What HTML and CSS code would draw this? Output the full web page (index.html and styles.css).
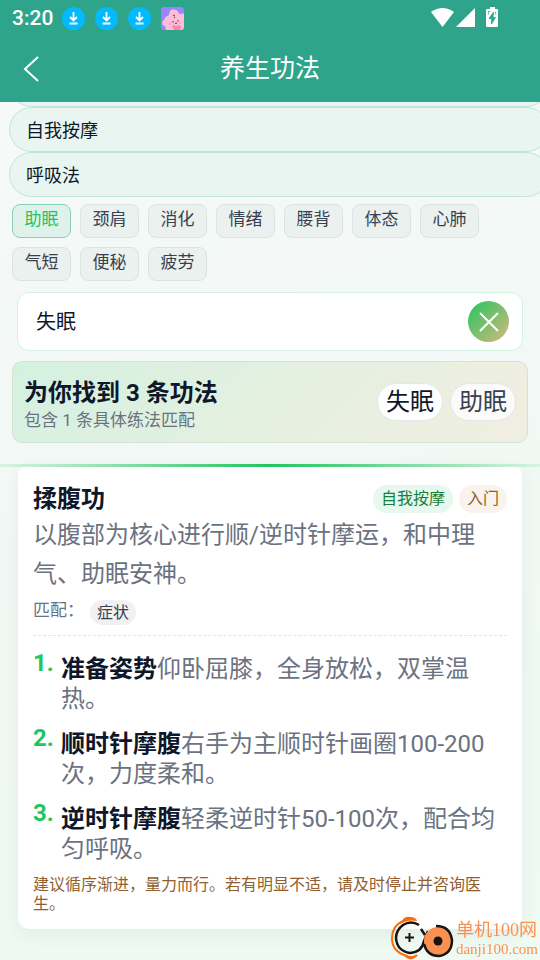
FILE: index.html
```html
<!DOCTYPE html>
<html lang="zh-CN">
<head>
<meta charset="utf-8">
<meta name="viewport" content="width=device-width, initial-scale=1">
<title>养生功法</title>
<link rel="stylesheet" href="styles.css">
</head>
<body>
<header class="top">
  <div class="status">
    <span class="time">3:20</span>
    <svg class="app" viewBox="0 0 23 23"><use href="#download"/></svg>
    <svg class="app" viewBox="0 0 23 23"><use href="#download"/></svg>
    <svg class="app" viewBox="0 0 23 23"><use href="#download"/></svg>
    <svg class="app" viewBox="0 0 23 23">
      <rect width="23" height="23" rx="3" fill="#9985fb"/>
      <path d="M8 8C8 3 12 1 14 3c2 0 4 2 4 4 2 0 4-1 5 0v13q0 3-3 3H5c-1-2 0-3-1-4-3 0-4-4-1-6 1-3 3-4 5-5z" fill="#fdbdd6"/>
      <path d="M11 19l2-1 2 1 3-1 2 2-1 3h-6z" fill="#fb86ad"/>
      <path d="M12 8l2 1M13 11l1-1M12 14v1.500M17 13v1.500M14 16q1 1 2 0" stroke="#55304d" stroke-width="1" fill="none"/>
      <path d="M8 17h2M18 16h2" stroke="#fb86ad" stroke-width="1"/>
    </svg>
    <svg class="signals" viewBox="0 0 70 22">
      <path d="M0 5Q11.500-3 23 5L11.500 20z" fill="#fff"/>
      <path d="M44 1v19H25z" fill="#fff"/>
      <path d="M59 0h5v2h2q1 0 1 1v16q0 1-1 1H56q-1 0-1-1V3q0-1 1-1h3z" fill="#fff"/>
      <path d="M62.500 5L58 11.500h2.500V17l4-6.500H62zM57 4.500h2.500M57.300 4.500v3M64.700 4.500v3" fill="#2ea58b" stroke="#2ea58b" stroke-width=".8"/>
    </svg>
  </div>
  <div class="nav">
    <button class="back" type="button" aria-label="返回"><svg viewBox="0 0 16 26"><path d="M15 1L2 13l13 12" fill="none" stroke="#fff" stroke-width="2"/></svg></button>
    <h1>养生功法</h1>
  </div>
</header>
<main>
  <div class="categories">
    <div class="category"></div>
    <button class="category" type="button">自我按摩</button>
    <button class="category" type="button">呼吸法</button>
  </div>
  <div class="chips">
    <button class="chip active" type="button">助眠</button>
    <button class="chip" type="button">颈肩</button>
    <button class="chip" type="button">消化</button>
    <button class="chip" type="button">情绪</button>
    <button class="chip" type="button">腰背</button>
    <button class="chip" type="button">体态</button>
    <button class="chip" type="button">心肺</button>
    <button class="chip" type="button">气短</button>
    <button class="chip" type="button">便秘</button>
    <button class="chip" type="button">疲劳</button>
  </div>
  <form class="search">
    <input type="text" value="失眠" aria-label="搜索">
    <button class="clear" type="button" aria-label="清除"><svg viewBox="0 0 20 20"><path d="M1 1l18 18M19 1L1 19" stroke="#fff" stroke-width="2"/></svg></button>
  </form>
  <section class="summary">
    <div class="found">
      <h2>为你找到 3 条功法</h2>
      <p>包含 1 条具体练法匹配</p>
    </div>
    <div class="terms">
      <span class="term main">失眠</span>
      <span class="term">助眠</span>
    </div>
  </section>
  <div class="result">
    <article class="card">
      <div class="heading">
        <h2>揉腹功</h2>
        <span class="tag kind">自我按摩</span>
        <span class="tag level">入门</span>
      </div>
      <p class="description">以腹部为核心进行顺/逆时针摩运，和中理气、助眠安神。</p>
      <div class="match"><span>匹配：</span><span class="reason">症状</span></div>
      <ol class="steps">
        <li><p><strong>准备姿势</strong>仰卧屈膝，全身放松，双掌温热。</p></li>
        <li><p><strong>顺时针摩腹</strong>右手为主顺时针画圈100-200次，力度柔和。</p></li>
        <li><p><strong>逆时针摩腹</strong>轻柔逆时针50-100次，配合均匀呼吸。</p></li>
      </ol>
      <p class="note">建议循序渐进，量力而行。若有明显不适，请及时停止并咨询医生。</p>
    </article>
  </div>
</main>
<div class="watermark">
  <svg viewBox="0 0 64 44">
    <path d="M25 4Q17-1 13 5Q2 10 2 22Q2 36 17 40Q22 43 27 39" fill="none" stroke="#fa6c0c" stroke-width="2"/>
    <path d="M10 8q4-8 10-7 6 0 7 4-9-2-17 3zM12 37q8 6 16 2-4 5-9 4-4-1-7-6z" fill="#fa6c0c"/>
    <path d="M29 9Q21 4 13 9Q6 14 6 22Q7 35 20 37Q32 36 34 25L38 15M31 13l4 6" fill="none" stroke="#181413" stroke-width="2.500"/>
    <circle cx="48" cy="25" r="14" fill="#fb9150"/>
    <path d="M46 10Q60 10 62 24Q62 38 49 40Q37 40 34 28" fill="none" stroke="#181413" stroke-width="2.500"/>
    <circle cx="48" cy="25" r="4.500" fill="#181413"/>
    <path d="M19.500 17v9M15 21.500h9" stroke="#181413" stroke-width="2"/>
  </svg>
  <div class="site"><span class="name">单机100网</span><span class="domain">danji100.com</span></div>
</div>
<svg class="defs" aria-hidden="true">
  <symbol id="download" viewBox="0 0 23 23">
    <circle cx="11.500" cy="11.500" r="11.500" fill="#02bafd"/>
    <path d="M11.500 5v8M8 10l3.500 3.500L15 10M7.500 16.500h8" fill="none" stroke="#fff" stroke-width="1.800"/>
  </symbol>
</svg>
</body>
</html>
```
FILE: styles.css
```css
* {
  box-sizing: border-box;
}

body {
  margin: 0;
  min-height: 100vh;
  overflow: hidden;
  font-family: Roboto, "Noto Sans CJK SC", sans-serif;
  color: #0f172a;
  background: linear-gradient(160deg, #f7faf9 0%, #f1f8f5 50%, #eefaf2 100%);
}

h1, h2, p, ol {
  margin: 0;
  padding: 0;
}

button, input {
  margin: 0;
  font: inherit;
  color: inherit;
}

.defs {
  position: absolute;
  width: 0;
  height: 0;
}

.top {
  position: relative;
  z-index: 1;
  height: 102px;
  color: #fff;
  background: #2ea58b;
}

.status {
  display: flex;
  align-items: center;
  gap: 10px;
  height: 36px;
  padding: 0 39px 0 12px;
}

.time {
  margin-right: -1px;
  font-size: 21px;
  font-weight: 500;
  line-height: 36px;
}

.app {
  width: 23px;
  height: 23px;
}

.signals {
  width: 70px;
  height: 22px;
  margin-left: auto;
}

.nav {
  display: grid;
  grid-template-columns: 64px 1fr 64px;
  align-items: center;
  height: 66px;
}

.nav h1 {
  font-size: 25px;
  font-weight: 400;
  line-height: 30px;
  text-align: center;
}

.back {
  display: flex;
  padding: 0 0 0 23px;
  border: 0;
  background: none;
}

.back svg {
  width: 16px;
  height: 26px;
}

.categories {
  display: flex;
  flex-direction: column;
  margin: -40px -9px 7px 9px;
}

.category {
  height: 45px;
  padding: 2px 16px 0;
  border: 1px solid #c1e5da;
  border-radius: 23px;
  font-size: 18px;
  line-height: 24px;
  text-align: left;
  background: #e8f5f0;
}

.chips {
  display: flex;
  flex-wrap: wrap;
  gap: 9px;
  padding: 0 12px;
}

.chip {
  width: 59px;
  height: 34px;
  padding: 0 0 4px;
  border: 1px solid #dde3e1;
  border-radius: 8px;
  font-size: 17px;
  line-height: 24px;
  color: #374151;
  background: #ebf1ef;
}

.chip.active {
  border-color: #8acfba;
  color: #22c55e;
  background: #def2eb;
}

.search {
  display: flex;
  align-items: center;
  height: 59px;
  margin: 11px 17px 10px;
  padding: 0 13px 0 18px;
  border: 1px solid #d3f3df;
  border-radius: 12px;
  background: #fff;
}

.search input {
  flex: 1;
  min-width: 0;
  height: 40px;
  padding: 0 0 3px;
  border: 0;
  outline: 0;
  font-size: 20px;
  background: none;
}

.clear {
  display: grid;
  place-items: center;
  width: 41px;
  height: 41px;
  padding: 0;
  border: 0;
  border-radius: 50%;
  background: linear-gradient(135deg, #22c55e, #d9b87d);
}

.clear svg {
  width: 20px;
  height: 20px;
}

.summary {
  display: flex;
  align-items: center;
  justify-content: space-between;
  height: 82px;
  margin: 0 12px;
  padding: 0 11px;
  border: 1px solid #d3e3d8;
  border-radius: 10px;
  background: linear-gradient(135deg, #d4f1e0, #e4f0e0 50%, #f1eee1);
}

.found {
  padding-top: 4px;
}

.found h2 {
  font-size: 24px;
  line-height: 32px;
}

.found p {
  font-size: 17px;
  line-height: 22px;
  color: #6b7280;
}

.terms {
  display: flex;
  gap: 7px;
}

.term {
  padding: 0 8px;
  border: 1px solid #e5e7eb;
  border-radius: 19px;
  font-size: 24px;
  line-height: 36px;
  color: #374151;
  background: #fbfbf9;
}

.term.main {
  color: #0f172a;
  background: #fff;
}

.result {
  margin-top: 21px;
  padding: 0 18px;
  background: linear-gradient(90deg, #d9f3e3, #22c55e, #d9f3e3) top / 100% 3px no-repeat;
}

.card {
  padding: 18px 15px 16px;
  border-radius: 12px;
  background: linear-gradient(#fff, #fff) 0 3px no-repeat;
  box-shadow: 0 6px 18px rgba(15, 60, 40, 0.06);
}

.heading {
  display: flex;
  align-items: center;
  gap: 6px;
}

.heading h2 {
  flex: 1;
  font-size: 24px;
  line-height: 34px;
}

.tag {
  padding: 0 8px;
  border-radius: 14px;
  font-size: 16px;
  line-height: 28px;
}

.kind {
  color: #15803d;
  background: #e7f8ee;
}

.level {
  color: #92602e;
  background: #f8f3ec;
}

.description {
  font-size: 24px;
  line-height: 39px;
  color: #6b7280;
}

.match {
  display: flex;
  align-items: center;
  gap: 6px;
  height: 36px;
  font-size: 17px;
  line-height: 20px;
  color: #6b7280;
}

.match > :first-child {
  padding-bottom: 4px;
}

.reason {
  padding: 0 7px;
  border-radius: 13px;
  font-size: 16px;
  line-height: 25px;
  color: #374151;
  background: #f1f1f2;
}

.steps {
  display: grid;
  gap: 15px;
  margin-top: 5px;
  padding-top: 18px;
  border-top: 1px dashed #e2e4e7;
  list-style: none;
  counter-reset: step;
}

.steps li {
  display: flex;
  font-size: 24px;
  line-height: 30px;
  color: #6b7280;
  counter-increment: step;
}

.steps li::before {
  content: counter(step) ".";
  flex: none;
  width: 28px;
  line-height: 18px;
  font-weight: 700;
  color: #22c55e;
}

.steps strong {
  color: #0f172a;
}

.note {
  margin-top: 11px;
  font-size: 16px;
  line-height: 19px;
  color: #92602e;
}

.watermark {
  position: fixed;
  right: 2px;
  bottom: 0;
  display: flex;
  align-items: center;
  gap: 2px;
  color: #fb9150;
}

.watermark svg {
  width: 64px;
  height: 44px;
}

.site {
  display: flex;
  flex-direction: column;
  padding-top: 2px;
  font-family: "Liberation Serif", "Noto Sans CJK SC", serif;
}

.name {
  font-size: 18px;
  line-height: 20px;
}

.domain {
  font-size: 15px;
  line-height: 18px;
}
```
